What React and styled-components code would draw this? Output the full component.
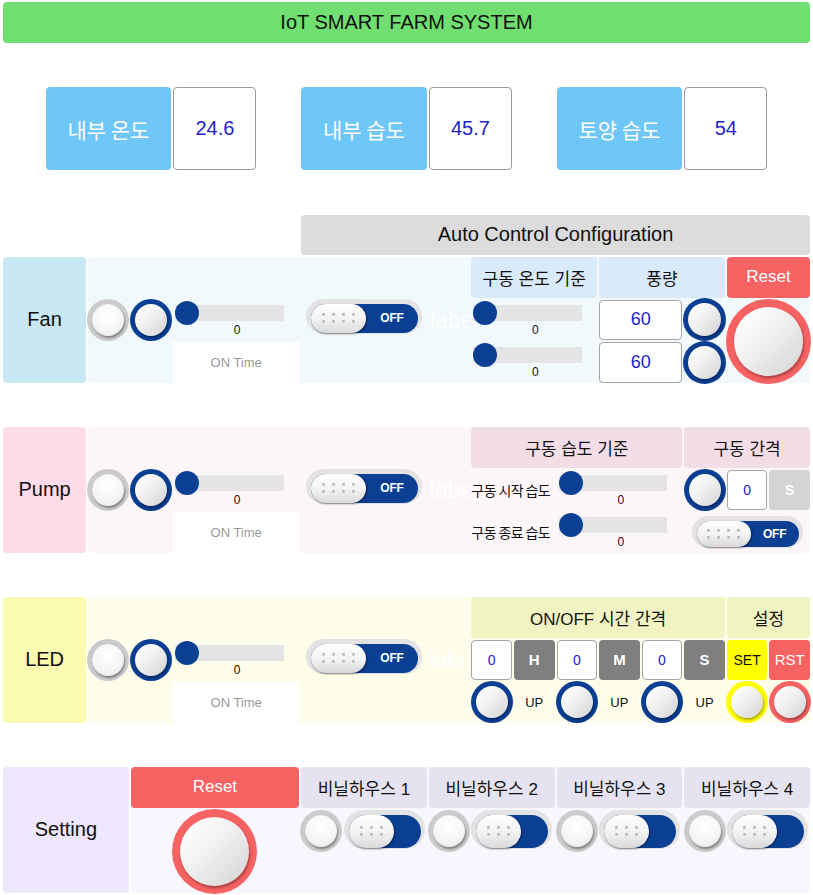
import React from "react";
import styled, { createGlobalStyle } from "styled-components";

const Global = createGlobalStyle`
  html, body { margin: 0; padding: 0; background: #fff; }
  body {
    width: 813px; height: 895px; overflow: hidden;
    font-family: "Liberation Sans", Arial, "Noto Sans CJK KR", sans-serif;
  }
`;

const BLUE = "#0a3f94";
const RED = "#f76262";

const Page = styled.div`
  display: grid;
  grid-template-columns: repeat(19, minmax(0, 1fr));
  grid-template-rows: repeat(21, 40.5px);
  gap: 2px;
  padding: 2px 3px 0;
  box-sizing: border-box;
  width: 813px;
`;

const Title = styled.div`
  grid-column: 1 / -1;
  grid-row: 1;
  background: #70de70;
  border-radius: 4px;
  display: flex; align-items: center; justify-content: center;
  font-size: 20px; color: #111;
`;

const SensorName = styled.div`
  grid-column: ${p => p.$c};
  grid-row: 3 / span 2;
  background: #6ec6f9;
  border-radius: 4px;
  display: flex; align-items: center; justify-content: center;
  color: #fff; font-size: 21px;
  font-family: "Noto Sans CJK KR", sans-serif;
`;

const SensorValue = styled.div`
  grid-column: ${p => p.$c};
  grid-row: 3 / span 2;
  background: #fff;
  border: 1px solid #9a9a9a;
  border-radius: 4px;
  display: flex; align-items: center; justify-content: center;
  color: #2222cc; font-size: 20px;
`;

const ConfigBar = styled.div`
  grid-column: 8 / span 12;
  grid-row: 6;
  background: #dcdcdc;
  border-radius: 4px;
  display: flex; align-items: center; justify-content: center;
  font-size: 20px; color: #111;
`;

const GroupLabel = styled.div`
  grid-column: 1 / span ${p => p.$span || 2};
  grid-row: ${p => p.$r} / span 3;
  background: ${p => p.$bg};
  border-radius: 4px;
  display: flex; align-items: center; justify-content: center;
  font-size: 20px; color: #111;
`;

const GroupPanel = styled.div`
  grid-column: ${p => p.$c} / span ${p => p.$cols};
  grid-row: ${p => p.$r} / span 3;
  background: ${p => p.$bg};
  border-radius: 4px;
  display: grid;
  grid-template-columns: repeat(${p => p.$cols}, minmax(0, 1fr));
  grid-template-rows: repeat(3, minmax(0, 1fr));
  gap: 2px;
`;

const SubHeader = styled.div`
  grid-column: ${p => p.$c};
  grid-row: 1;
  background: ${p => p.$bg};
  color: ${p => p.$color || "#111"};
  border-radius: 4px;
  display: flex; align-items: center; justify-content: center;
  font-size: 17px;
  font-family: "Liberation Sans", "Noto Sans CJK KR", sans-serif;
  white-space: nowrap;
`;

const Knob = styled.div`
  grid-column: ${p => p.$c};
  grid-row: ${p => p.$r};
  justify-self: center;
  align-self: ${p => p.$align || "center"};
  width: ${p => p.$size || 42}px;
  height: ${p => p.$size || 42}px;
  border-radius: 50%;
  box-sizing: border-box;
  background: ${p => p.$ring};
  position: relative;
  &::after {
    content: "";
    position: absolute;
    inset: ${p => p.$w || 5}px;
    border-radius: 50%;
    background: ${p => p.$flat
      ? "radial-gradient(circle at 50% 35%, #ffffff 0%, #f6f6f6 55%, #e4e4e4 100%)"
      : "linear-gradient(135deg, #ffffff 10%, #f1f1f1 45%, #d2d2d2 100%)"};
    box-shadow: ${p => p.$flat
      ? "1px 2px 2px rgba(0,0,0,0.35), inset 0 0 1px rgba(0,0,0,0.2)"
      : "1px 2px 3px rgba(0,0,0,0.35)"};
  }
`;

const SliderBox = styled.div`
  grid-column: ${p => p.$c};
  grid-row: ${p => p.$r};
  display: flex;
  align-items: flex-start;
  min-width: 0;
`;

const SliderCaption = styled.div`
  width: 86px;
  flex: none;
  align-self: center;
  font-size: 14px;
  color: #111;
  font-family: "Noto Sans CJK KR", sans-serif;
  white-space: nowrap;
  letter-spacing: -0.6px;
  overflow: hidden;
`;

const SliderBody = styled.div`
  flex: 1;
  display: flex;
  flex-direction: column;
  padding: 5px 15px 0 2px;
`;

const Track = styled.div`
  height: 16px;
  background: #e4e4e4;
  position: relative;
`;

const Thumb = styled.div`
  position: absolute;
  left: 0; top: -4px;
  width: 24px; height: 24px;
  border-radius: 50%;
  background: ${BLUE};
`;

const SliderValue = styled.div`
  margin-top: 2px;
  padding-left: 15px;
  text-align: center;
  font-size: 12px;
  line-height: 14px;
  color: #111;
`;

const OnTime = styled.div`
  grid-column: 3 / span 3;
  grid-row: 3;
  background: #fff;
  display: flex; align-items: center; justify-content: center;
  font-size: 13px; color: #999;
`;

const FaintLabel = styled.div`
  grid-column: 9;
  grid-row: 2;
  overflow: hidden;
  white-space: nowrap;
  padding-left: 1px;
  align-self: center;
  color: #fff;
  font-size: 23px;
  line-height: 28px;
`;

const ToggleOuter = styled.div`
  grid-column: ${p => p.$c};
  grid-row: ${p => p.$r};
  justify-self: ${p => p.$justify || "center"};
  align-self: start;
  margin-top: ${p => p.$top || 0}px;
  width: ${p => p.$w}px;
  height: ${p => p.$h}px;
  border-radius: 999px;
  background: #e3e3e3;
  padding: 5px 4px 1px 5px;
  box-sizing: border-box;
  display: flex;
`;

const ToggleTrack = styled.div`
  flex: 1;
  border-radius: 999px;
  background: ${BLUE};
  display: flex;
  align-items: center;
`;

const ToggleKnob = styled.div`
  width: ${p => p.$kw}px;
  align-self: stretch;
  border-radius: 999px;
  background: linear-gradient(180deg, #ffffff 0%, #f2f2f2 55%, #d9d9d9 100%);
  box-shadow: 1px 1px 2px rgba(0,0,0,0.45);
  display: grid;
  grid-template-columns: repeat(${p => p.$dots}, 3px);
  grid-auto-rows: 3px;
  gap: 4px 7px;
  align-content: center;
  justify-content: center;
`;

const Dot = styled.span`
  width: 3px; height: 3px; border-radius: 50%;
  background: #cdcdcd;
  box-shadow: inset 0 1px 1px rgba(0,0,0,0.2);
`;

const ToggleText = styled.span`
  flex: 1;
  text-align: center;
  color: #fff;
  font-weight: bold;
  font-size: 12px;
  letter-spacing: -0.3px;
`;

const NumberBox = styled.div`
  grid-column: ${p => p.$c};
  grid-row: ${p => p.$r};
  background: #fff;
  border: 1px solid #a5a5a5;
  border-radius: 4px;
  display: flex; align-items: center; justify-content: center;
  color: #2222cc;
  font-size: ${p => p.$fs || 14}px;
`;

const UnitBox = styled.div`
  grid-column: ${p => p.$c};
  grid-row: ${p => p.$r};
  background: ${p => p.$bg};
  color: ${p => p.$color};
  border-radius: 4px;
  display: flex; align-items: center; justify-content: center;
  font-size: ${p => p.$fs || 15}px;
  font-weight: ${p => (p.$bold ? "bold" : "normal")};
`;

const UpLabel = styled.div`
  grid-column: ${p => p.$c};
  grid-row: 3;
  display: flex; align-items: center; justify-content: center;
  font-size: 13px; color: #111;
`;

const Toggle = ({ c, r, w, h, kw, dots, text, justify, top }) => (
  <ToggleOuter $c={c} $r={r} $w={w} $h={h} $justify={justify} $top={top}>
    <ToggleTrack>
      <ToggleKnob $kw={kw} $dots={dots}>
        {Array.from({ length: dots * 2 }).map((_, i) => <Dot key={i} />)}
      </ToggleKnob>
      {text && <ToggleText>{text}</ToggleText>}
    </ToggleTrack>
  </ToggleOuter>
);

const Slider = ({ c, r, caption }) => (
  <SliderBox $c={c} $r={r}>
    {caption && <SliderCaption>{caption}</SliderCaption>}
    <SliderBody>
      <Track><Thumb /></Track>
      <SliderValue>0</SliderValue>
    </SliderBody>
  </SliderBox>
);

const GRAY_RING = "#cbcbcb";

const LeftControls = ({ text = "OFF" }) => (
  <>
    <Knob $c={1} $r={2} $ring={GRAY_RING} $w={5} $flat />
    <Knob $c={2} $r={2} $ring={BLUE} $w={5} />
    <Slider c="3 / span 3" r={2} />
    <OnTime>ON Time</OnTime>
    <Toggle c="6 / span 3" r={2} w={116} h={35} kw={55} dots={4} text={text} top={-1} />
    <FaintLabel>label</FaintLabel>
  </>
);

const houses = [1, 2, 3, 4];

export default function App() {
  return (
    <>
      <Global />
      <Page>
        <Title>IoT SMART FARM SYSTEM</Title>

        <SensorName $c="2 / span 3">내부 온도</SensorName>
        <SensorValue $c="5 / span 2">24.6</SensorValue>
        <SensorName $c="8 / span 3">내부 습도</SensorName>
        <SensorValue $c="11 / span 2">45.7</SensorValue>
        <SensorName $c="14 / span 3">토양 습도</SensorName>
        <SensorValue $c="17 / span 2">54</SensorValue>

        <ConfigBar>Auto Control Configuration</ConfigBar>

        {/* Fan */}
        <GroupLabel $r={7} $bg="#c8e8f4">Fan</GroupLabel>
        <GroupPanel $c={3} $cols={17} $r={7} $bg="#f1f9fc">
          <LeftControls />
          <SubHeader $c="10 / span 3" $bg="#d9eafb">구동 온도 기준</SubHeader>
          <Slider c="10 / span 3" r={2} />
          <Slider c="10 / span 3" r={3} />
          <SubHeader $c="13 / span 3" $bg="#d9eafb">풍량</SubHeader>
          <NumberBox $c="13 / span 2" $r={2} $fs={18}>60</NumberBox>
          <NumberBox $c="13 / span 2" $r={3} $fs={18}>60</NumberBox>
          <Knob $c={15} $r={2} $ring={BLUE} $w={5} $size={43} />
          <Knob $c={15} $r={3} $ring={BLUE} $w={5} $size={43} />
          <SubHeader $c="16 / span 2" $bg={RED} $color="#fff">Reset</SubHeader>
          <Knob $c="16 / span 2" $r="2 / span 2" $ring={RED} $w={8} $size={85} />
        </GroupPanel>

        {/* Pump */}
        <GroupLabel $r={11} $bg="#fddbe9">Pump</GroupLabel>
        <GroupPanel $c={3} $cols={17} $r={11} $bg="#fdf6f9">
          <LeftControls />
          <SubHeader $c="10 / span 5" $bg="#f3dde6">구동 습도 기준</SubHeader>
          <SubHeader $c="15 / span 3" $bg="#f3dde6">구동 간격</SubHeader>
          <Slider c="10 / span 5" r={2} caption="구동 시작 습도" />
          <Slider c="10 / span 5" r={3} caption="구동 종료 습도" />
          <Knob $c={15} $r={2} $ring={BLUE} $w={5} />
          <NumberBox $c={16} $r={2}>0</NumberBox>
          <UnitBox $c={17} $r={2} $bg="#d4d4d4" $color="#fff" $bold $fs={14}>S</UnitBox>
          <Toggle c="15 / span 3" r={3} w={111} h={32} kw={54} dots={4} text="OFF" top={4} />
        </GroupPanel>

        {/* LED */}
        <GroupLabel $r={15} $bg="#fafbb0">LED</GroupLabel>
        <GroupPanel $c={3} $cols={17} $r={15} $bg="#fdfdea">
          <LeftControls />
          <SubHeader $c="10 / span 6" $bg="#f1f3c2">ON/OFF 시간 간격</SubHeader>
          <SubHeader $c="16 / span 2" $bg="#f1f3c2">설정</SubHeader>
          <NumberBox $c={10} $r={2}>0</NumberBox>
          <UnitBox $c={11} $r={2} $bg="#7f7f7f" $color="#fff" $bold>H</UnitBox>
          <NumberBox $c={12} $r={2}>0</NumberBox>
          <UnitBox $c={13} $r={2} $bg="#7f7f7f" $color="#fff" $bold>M</UnitBox>
          <NumberBox $c={14} $r={2}>0</NumberBox>
          <UnitBox $c={15} $r={2} $bg="#7f7f7f" $color="#fff" $bold>S</UnitBox>
          <UnitBox $c={16} $r={2} $bg="#ffff00" $color="#111" $fs={14}>SET</UnitBox>
          <UnitBox $c={17} $r={2} $bg={RED} $color="#fff">RST</UnitBox>
          <Knob $c={10} $r={3} $ring={BLUE} $w={5} />
          <UpLabel $c={11}>UP</UpLabel>
          <Knob $c={12} $r={3} $ring={BLUE} $w={5} />
          <UpLabel $c={13}>UP</UpLabel>
          <Knob $c={14} $r={3} $ring={BLUE} $w={5} />
          <UpLabel $c={15}>UP</UpLabel>
          <Knob $c={16} $r={3} $ring="#ffff00" $w={5} />
          <Knob $c={17} $r={3} $ring={RED} $w={5} />
        </GroupPanel>

        {/* Setting */}
        <GroupLabel $r={19} $span={3} $bg="#efe7fd">Setting</GroupLabel>
        <GroupPanel $c={4} $cols={16} $r={19} $bg="#f8f6fe">
          <SubHeader $c="1 / span 4" $bg={RED} $color="#fff">Reset</SubHeader>
          <Knob $c="2 / span 2" $r="2 / span 2" $ring={RED} $w={8} $size={85} />
          {houses.map((n, i) => (
            <React.Fragment key={n}>
              <SubHeader $c={`${5 + i * 3} / span 3`} $bg="#e6e3f0">비닐하우스 {n}</SubHeader>
              <Knob $c={5 + i * 3} $r={2} $ring={GRAY_RING} $w={5} $flat $align="start" />
              <Toggle c={`${6 + i * 3} / span 2`} r={2} w={81} h={39} kw={45} dots={3} justify="start" />
            </React.Fragment>
          ))}
        </GroupPanel>
      </Page>
    </>
  );
}
